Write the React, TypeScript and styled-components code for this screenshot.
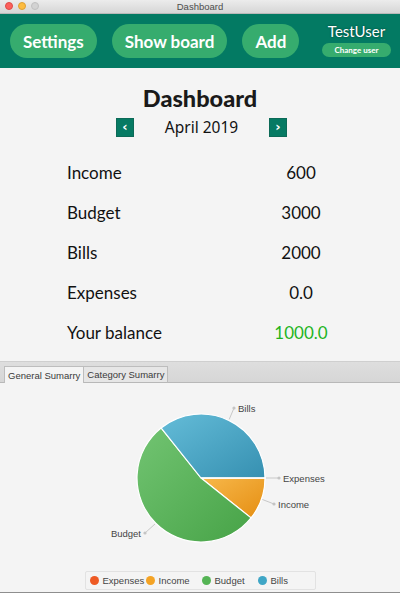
import styled, { createGlobalStyle } from 'styled-components';

type Slice = {
  name: string;
  value: number;
  from: string;
  to: string;
  dot: string;
};

const slices: Array<Slice> = [
  { name: 'Expenses', value: 0, from: '#f5784a', to: '#e2541f', dot: '#ee5a24' },
  { name: 'Income', value: 600, from: '#f7b84b', to: '#e58e12', dot: '#f4a324' },
  { name: 'Budget', value: 3000, from: '#72c472', to: '#47a347', dot: '#55b455' },
  { name: 'Bills', value: 2000, from: '#64bcd8', to: '#3690b1', dot: '#3fa6c6' },
];

const stats = [
  { label: 'Income', value: '600' },
  { label: 'Budget', value: '3000' },
  { label: 'Bills', value: '2000' },
  { label: 'Expenses', value: '0.0' },
  { label: 'Your balance', value: '1000.0', positive: true },
];

// label placement around the pie, hand tuned to the JavaFX layout
const labelSpots: Record<string, { x: number; y: number; anchor: 'start' | 'end' }> = {
  Bills: { x: 234, y: 25, anchor: 'start' },
  Expenses: { x: 279, y: 95, anchor: 'start' },
  Income: { x: 274, y: 121, anchor: 'start' },
  Budget: { x: 145, y: 150, anchor: 'end' },
};

const CX = 201;
const CY = 95;
const R = 64;

const point = (deg: number, r = R) => {
  const rad = (deg * Math.PI) / 180;
  return { x: CX + r * Math.cos(rad), y: CY + r * Math.sin(rad) };
};

function PieChart() {
  const total = slices.reduce((sum, s) => sum + s.value, 0);
  let angle = 0;

  const parts = slices.map(slice => {
    const sweep = (slice.value / total) * 360;
    const start = angle;
    const end = angle + sweep;
    angle = end;
    return { ...slice, start, end, mid: (start + end) / 2 };
  });

  return (
    <ChartSvg width="400" height="186" viewBox="0 0 400 186">
      <defs>
        {parts.map(p => (
          <linearGradient key={p.name} id={`grad-${p.name}`} x1="0" y1="0" x2="1" y2="1">
            <stop offset="0%" stopColor={p.from} />
            <stop offset="100%" stopColor={p.to} />
          </linearGradient>
        ))}
      </defs>
      {parts.map(p => {
        if (p.value === 0) return null;
        const a = point(p.start);
        const b = point(p.end);
        const large = p.end - p.start > 180 ? 1 : 0;
        return (
          <path
            key={p.name}
            d={`M${CX} ${CY} L${a.x} ${a.y} A${R} ${R} 0 ${large} 1 ${b.x} ${b.y} Z`}
            fill={`url(#grad-${p.name})`}
            stroke="#ffffff"
            strokeWidth="1.2"
            strokeLinejoin="round"
          />
        );
      })}
      <line x1={CX} y1={CY} x2={CX + R} y2={CY} stroke="#ffffff" strokeWidth="1.4" />
      {parts.map(p => {
        const edge = point(p.mid, R + 1);
        const spot = labelSpots[p.name];
        const tx = spot.anchor === 'start' ? spot.x + 4 : spot.x - 4;
        return (
          <g key={`label-${p.name}`}>
            <line x1={edge.x} y1={edge.y} x2={spot.x} y2={spot.y} stroke="#c8c8c8" strokeWidth="1" />
            <circle cx={spot.x} cy={spot.y} r="1.6" fill="#c4c4c4" />
            <ChartLabel x={tx} y={spot.y + 3.5} textAnchor={spot.anchor}>
              {p.name}
            </ChartLabel>
          </g>
        );
      })}
    </ChartSvg>
  );
}

export default function App() {
  return (
    <>
      <GlobalStyle />
      <Window>
        <TitleBar>
          <Lights>
            <Light color="#fc605c" edge="#de4a46" />
            <Light color="#fdbc40" edge="#de9f34" />
            <Light color="#d3d3d3" edge="#c0c0c0" />
          </Lights>
          <WindowTitle>Dashboard</WindowTitle>
        </TitleBar>

        <Header>
          <NavButton type="button">Settings</NavButton>
          <NavButton type="button">Show board</NavButton>
          <NavButton type="button">Add</NavButton>
          <UserBox>
            <UserName>TestUser</UserName>
            <ChangeUserButton type="button">Change user</ChangeUserButton>
          </UserBox>
        </Header>

        <Main>
          <PageTitle>Dashboard</PageTitle>
          <MonthRow>
            <ArrowButton type="button">‹</ArrowButton>
            <MonthLabel>April 2019</MonthLabel>
            <ArrowButton type="button">›</ArrowButton>
          </MonthRow>
          <StatsGrid>
            {stats.map(stat => (
              <StatRow key={stat.label}>
                <StatLabel>{stat.label}</StatLabel>
                <StatValue positive={stat.positive}>{stat.value}</StatValue>
              </StatRow>
            ))}
          </StatsGrid>
        </Main>

        <TabPane>
          <TabHeader>
            <Tab active>General Sumarry</Tab>
            <Tab>Category Sumarry</Tab>
          </TabHeader>
          <TabContent>
            <PieChart />
            <Legend>
              {slices.map(s => (
                <LegendItem key={s.name}>
                  <LegendDot color={s.dot} />
                  {s.name}
                </LegendItem>
              ))}
            </Legend>
          </TabContent>
        </TabPane>
      </Window>
    </>
  );
}

const GlobalStyle = createGlobalStyle`
  * {
    box-sizing: border-box;
  }

  body {
    margin: 0;
    background: #f4f4f4;
    font-family: Lato, "Noto Sans", sans-serif;
  }
`;

const Window = styled.div`
  display: flex;
  flex-direction: column;

  width: 400px;
  height: 593px;
  overflow: hidden;
  border-bottom: 1px solid #8e8e8e;

  background: #f4f4f4;
`;

const TitleBar = styled.div`
  position: relative;
  display: flex;
  align-items: center;
  justify-content: center;

  height: 14px;
  flex-shrink: 0;
  border-bottom: 1px solid #b9b9b9;

  background: linear-gradient(#ececec, #d6d6d6);
`;

const Lights = styled.div`
  position: absolute;
  left: 5px;
  top: 2px;
  display: flex;
  gap: 5px;
`;

const Light = styled.span<{ color: string; edge: string }>`
  width: 8px;
  height: 8px;
  border-radius: 50%;
  border: 0.5px solid ${({ edge }) => edge};

  background: ${({ color }) => color};
`;

const WindowTitle = styled.span`
  font-family: "Liberation Sans", Arial, sans-serif;
  font-size: 9.5px;
  color: #4d4d4d;
`;

const Header = styled.header`
  display: flex;
  align-items: center;
  gap: 15px;

  height: 54px;
  flex-shrink: 0;
  padding: 0 9px 0 10px;

  background: #037a63;
`;

const NavButton = styled.button`
  flex-shrink: 0;
  height: 34px;
  padding: 0 13px;
  border: none;
  border-radius: 17px;

  background: #36ac6e;
  color: #ffffff;
  font-family: Lato, sans-serif;
  font-size: 17px;
  font-weight: 700;
  white-space: nowrap;
`;

const UserBox = styled.div`
  display: flex;
  flex-direction: column;
  align-items: center;
  gap: 3px;

  margin-left: auto;
  margin-top: -3px;
`;

const UserName = styled.span`
  color: #ffffff;
  font-family: Lato, sans-serif;
  font-size: 15px;
  line-height: 17px;
  text-shadow: 0 0 2px rgba(0, 0, 0, 0.55);
`;

const ChangeUserButton = styled.button`
  width: 69px;
  height: 14px;
  padding: 0;
  border: none;
  border-radius: 7px;

  background: #36ac6e;
  color: #ffffff;
  font-family: Lato, sans-serif;
  font-size: 8px;
  font-weight: 700;
  white-space: nowrap;
`;

const Main = styled.main`
  display: flex;
  flex-direction: column;
  align-items: center;

  height: 293px;
  flex-shrink: 0;
  padding-top: 17px;
`;

const PageTitle = styled.h1`
  margin: 0;

  color: #1a1a1a;
  font-family: Lato, sans-serif;
  font-size: 23.5px;
  font-weight: 900;
  line-height: 26px;
`;

const MonthRow = styled.div`
  display: grid;
  grid-template-columns: 18px 1fr 18px;
  align-items: center;

  width: 171px;
  margin-top: 5px;
  margin-left: 3px;
`;

const ArrowButton = styled.button`
  display: flex;
  align-items: center;
  justify-content: center;

  width: 18px;
  height: 19px;
  padding: 0 0 2px;
  border: 1px solid #0c6a57;

  background: #067a63;
  color: #ffffff;
  font-family: "DejaVu Sans", sans-serif;
  font-size: 13px;
  font-weight: 700;
`;

const MonthLabel = styled.span`
  text-align: center;

  color: #111111;
  font-family: "Noto Sans", sans-serif;
  font-size: 15.5px;
`;

const StatsGrid = styled.div`
  display: flex;
  flex-direction: column;

  width: 100%;
  margin-top: 14px;
  padding-left: 67px;
`;

const StatRow = styled.div`
  display: grid;
  grid-template-columns: 166px 136px;
  align-items: center;

  height: 40px;
`;

const StatLabel = styled.span`
  color: #111111;
  font-family: Lato, sans-serif;
  font-size: 17px;
`;

const StatValue = styled.span<{ positive?: boolean }>`
  text-align: center;

  color: ${({ positive }) => (positive ? '#1eb41e' : '#111111')};
  font-family: Lato, sans-serif;
  font-size: 17px;
`;

const TabPane = styled.section`
  display: flex;
  flex-direction: column;
  flex: 1;
`;

const TabHeader = styled.div`
  display: flex;
  align-items: flex-end;

  height: 22px;
  padding-left: 4px;
  border-top: 1px solid #cfcfcf;
  border-bottom: 1px solid #b8b8b8;

  background: linear-gradient(#dedede, #d6d6d6);
`;

const Tab = styled.div<{ active?: boolean }>`
  display: flex;
  align-items: center;

  height: 17px;
  margin-bottom: -1px;
  padding: 0 3px;
  border: 1px solid #bdbdbd;
  border-left-width: ${({ active }) => (active ? '1px' : '0')};
  border-bottom: ${({ active }) => (active ? 'none' : '1px solid #b8b8b8')};

  background: ${({ active }) => (active ? '#f4f4f4' : '#e6e6e6')};
  color: #3a3a3a;
  font-family: "Liberation Sans", Arial, sans-serif;
  font-size: 9.5px;
`;

const TabContent = styled.div`
  display: flex;
  flex-direction: column;
  align-items: center;
  flex: 1;
`;

const ChartSvg = styled.svg`
  display: block;
  flex-shrink: 0;
`;

const ChartLabel = styled.text`
  fill: #444444;
  font-family: "Liberation Sans", Arial, sans-serif;
  font-size: 9.5px;
`;

const Legend = styled.div`
  display: grid;
  grid-template-columns: repeat(4, 56px);
  align-items: center;

  height: 19px;
  margin-top: 2px;
  padding: 0 1px 0 4px;
  border: 1px solid #e2e2e2;
  border-radius: 2px;
`;

const LegendItem = styled.div`
  display: flex;
  align-items: center;
  gap: 4px;

  color: #444444;
  font-family: "Liberation Sans", Arial, sans-serif;
  font-size: 9.5px;
  white-space: nowrap;
`;

const LegendDot = styled.span<{ color: string }>`
  width: 9px;
  height: 9px;
  border-radius: 50%;
  flex-shrink: 0;

  background: ${({ color }) => color};
`;
